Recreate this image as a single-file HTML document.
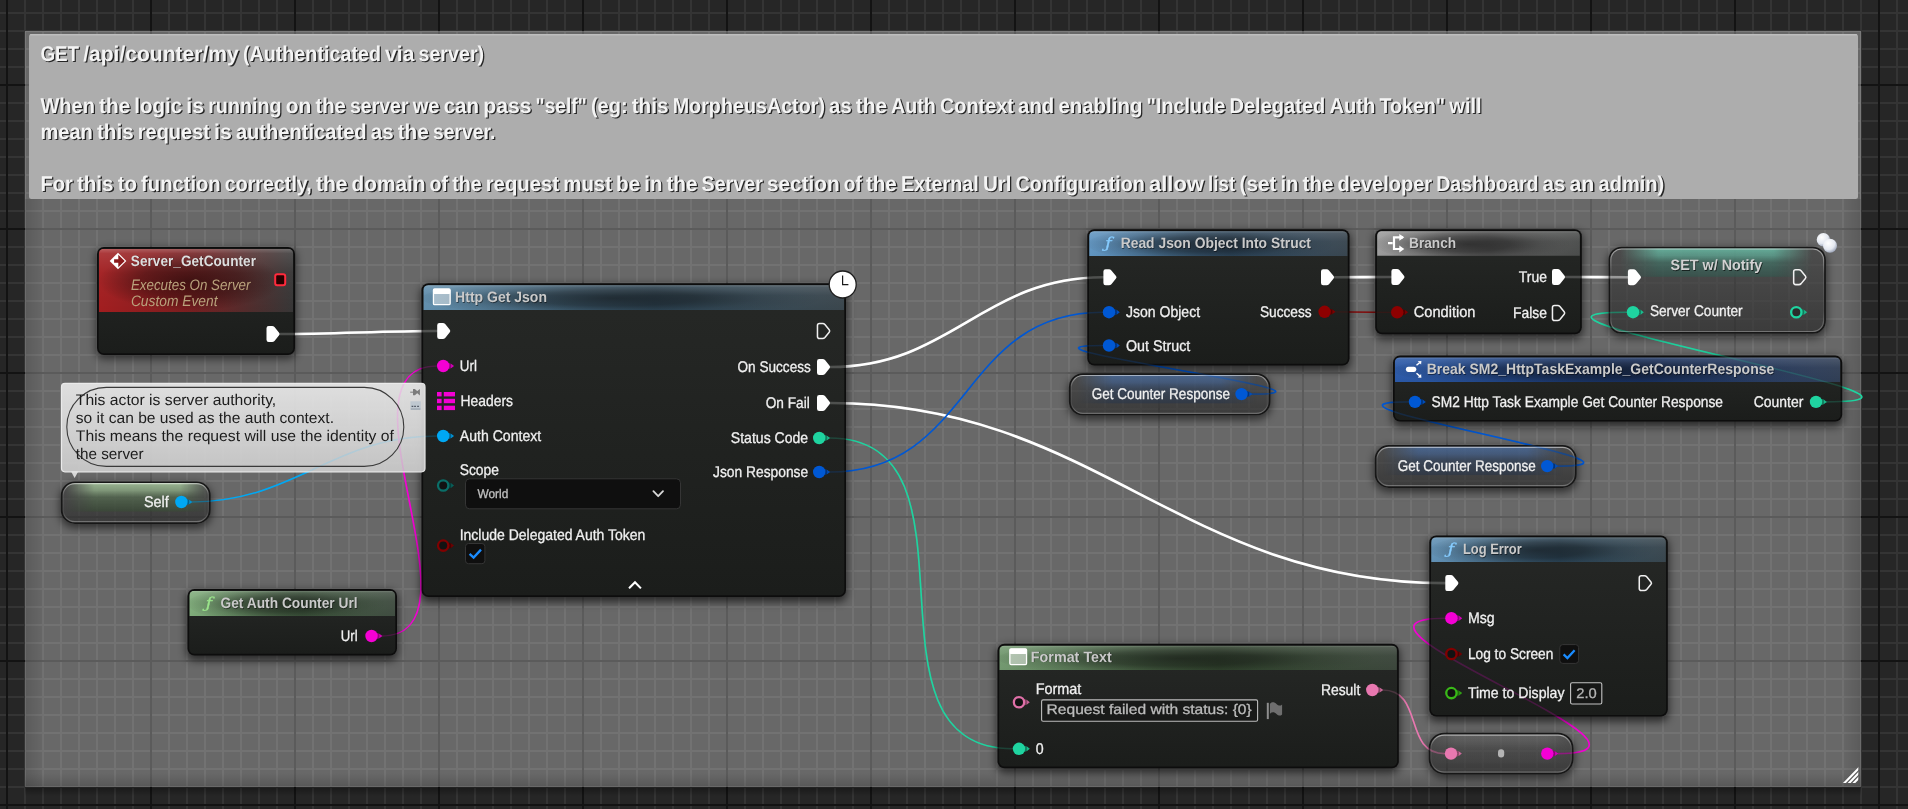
<!DOCTYPE html>
<html lang="en"><head><meta charset="utf-8"><title>Blueprint - GET /api/counter/my</title>
<style>html,body{margin:0;padding:0;background:#262626;overflow:hidden}svg{display:block;will-change:transform}text{white-space:pre}</style></head>
<body><svg width="1908" height="809" viewBox="0 0 1908 809" text-rendering="geometricPrecision"><defs>
<linearGradient id="cmtB" x1="0" y1="0" x2="0" y2="1"><stop offset="0" stop-color="#000" stop-opacity="0"/><stop offset="1" stop-color="#000" stop-opacity="0.16"/></linearGradient>
<linearGradient id="cmtR" x1="0" y1="0" x2="1" y2="0"><stop offset="0" stop-color="#000" stop-opacity="0"/><stop offset="1" stop-color="#000" stop-opacity="0.13"/></linearGradient>
<linearGradient id="cmtL" x1="0" y1="0" x2="1" y2="0"><stop offset="0" stop-color="#000" stop-opacity="0.13"/><stop offset="1" stop-color="#000" stop-opacity="0"/></linearGradient>
<linearGradient id="cmtS" x1="0" y1="0" x2="0" y2="1"><stop offset="0" stop-color="#000" stop-opacity="0.35"/><stop offset="1" stop-color="#000" stop-opacity="0"/></linearGradient>
<clipPath id="grip"><rect x="1840" y="765" width="18.3" height="18"/></clipPath>
<filter id="sh" x="-20%" y="-20%" width="140%" height="150%"><feGaussianBlur stdDeviation="4"/></filter>
<linearGradient id="gloss" x1="0" y1="0" x2="0" y2="1"><stop offset="0" stop-color="#fff" stop-opacity="0.30"/><stop offset="0.06" stop-color="#fff" stop-opacity="0.14"/><stop offset="0.3" stop-color="#fff" stop-opacity="0.05"/><stop offset="1" stop-color="#fff" stop-opacity="0"/></linearGradient>
<radialGradient id="hdark" cx="0.45" cy="0.5" r="0.5"><stop offset="0" stop-color="#000" stop-opacity="0.6"/><stop offset="0.4" stop-color="#000" stop-opacity="0.44"/><stop offset="0.7" stop-color="#000" stop-opacity="0.14"/><stop offset="0.88" stop-color="#000" stop-opacity="0.04"/><stop offset="1" stop-color="#000" stop-opacity="0"/></radialGradient>
<linearGradient id="bodyg" x1="0" y1="0" x2="0" y2="1"><stop offset="0" stop-color="#262826"/><stop offset="1" stop-color="#1b1d1b"/></linearGradient>

<linearGradient id="evg" x1="0" y1="0" x2="1" y2="0"><stop offset="0" stop-color="#a11a1c"/><stop offset="0.45" stop-color="#7a1a1c"/><stop offset="0.8" stop-color="#4a2a2a"/><stop offset="1" stop-color="#333"/></linearGradient>
<radialGradient id="evd" cx="0.5" cy="0.5" r="0.5"><stop offset="0" stop-color="#200" stop-opacity="0.75"/><stop offset="0.55" stop-color="#200" stop-opacity="0.45"/><stop offset="1" stop-color="#200" stop-opacity="0"/></radialGradient>
<clipPath id="evc"><rect x="99" y="249" width="194" height="63"/></clipPath>
<linearGradient id="hg1" x1="0" y1="0" x2="1" y2="0"><stop offset="0" stop-color="#5e8cab"/><stop offset="0.55" stop-color="#2f4a5c"/><stop offset="1" stop-color="#364249"/></linearGradient><clipPath id="hg1c"><rect x="423.5" y="285.3" width="420.5" height="24.69999999999999"/></clipPath><linearGradient id="hg2" x1="0" y1="0" x2="1" y2="0"><stop offset="0" stop-color="#7dab78"/><stop offset="0.55" stop-color="#3f5a3e"/><stop offset="1" stop-color="#3c493d"/></linearGradient><clipPath id="hg2c"><rect x="189.5" y="591" width="205.5" height="25"/></clipPath><linearGradient id="hg3" x1="0" y1="0" x2="1" y2="0"><stop offset="0" stop-color="#5d93c0"/><stop offset="0.55" stop-color="#2d4a63"/><stop offset="1" stop-color="#35424c"/></linearGradient><clipPath id="hg3c"><rect x="1089.3" y="231.3" width="258.2" height="24.69999999999999"/></clipPath><linearGradient id="hg4" x1="0" y1="0" x2="1" y2="0"><stop offset="0" stop-color="#9a9a9a"/><stop offset="0.55" stop-color="#5a5a5a"/><stop offset="1" stop-color="#474948"/></linearGradient><clipPath id="hg4c"><rect x="1377.2" y="231.2" width="202.6" height="24.600000000000023"/></clipPath><linearGradient id="hg5" x1="0" y1="0" x2="1" y2="0"><stop offset="0" stop-color="#2655a5"/><stop offset="0.55" stop-color="#173570"/><stop offset="1" stop-color="#2c3a51"/></linearGradient><clipPath id="hg5c"><rect x="1395" y="357.6" width="445.2" height="24.399999999999977"/></clipPath><linearGradient id="hg6" x1="0" y1="0" x2="1" y2="0"><stop offset="0" stop-color="#5e8fb4"/><stop offset="0.55" stop-color="#2c4a5f"/><stop offset="1" stop-color="#34424a"/></linearGradient><clipPath id="hg6c"><rect x="1431.3" y="537.4" width="234.5" height="24.600000000000023"/></clipPath><linearGradient id="hg7" x1="0" y1="0" x2="1" y2="0"><stop offset="0" stop-color="#6f966c"/><stop offset="0.55" stop-color="#33492f"/><stop offset="1" stop-color="#374237"/></linearGradient><clipPath id="hg7c"><rect x="999.5" y="645.8" width="397.3" height="24.200000000000045"/></clipPath><linearGradient id="rim" x1="0" y1="0" x2="0" y2="1"><stop offset="0" stop-color="#fff" stop-opacity="0.5"/><stop offset="0.3" stop-color="#fff" stop-opacity="0.10"/><stop offset="0.75" stop-color="#fff" stop-opacity="0.06"/><stop offset="1" stop-color="#fff" stop-opacity="0.28"/></linearGradient><linearGradient id="vbody" x1="0" y1="0" x2="0" y2="1"><stop offset="0" stop-color="#3c3c3c" stop-opacity="0.62"/><stop offset="1" stop-color="#202020" stop-opacity="0.62"/></linearGradient><linearGradient id="hfade" x1="0" y1="0" x2="1" y2="0"><stop offset="0" stop-color="#fff" stop-opacity="0"/><stop offset="0.2" stop-color="#fff" stop-opacity="1"/><stop offset="0.8" stop-color="#fff" stop-opacity="1"/><stop offset="1" stop-color="#fff" stop-opacity="0"/></linearGradient><linearGradient id="vn8" x1="0" y1="0" x2="0" y2="1"><stop offset="0" stop-color="#a8c89e" stop-opacity="0.85"/><stop offset="0.26" stop-color="#8fad87" stop-opacity="0.78"/><stop offset="0.5" stop-color="#576f52" stop-opacity="0.68"/><stop offset="1" stop-color="#384c34" stop-opacity="0.59"/></linearGradient><mask id="vn8m" maskUnits="userSpaceOnUse" x="60.9" y="481.5" width="149.7" height="42.400000000000006"><rect x="65.5" y="481.5" width="143.5" height="42.400000000000006" fill="url(#hfade)"/></mask><clipPath id="vn8c"><rect x="62.4" y="483.0" width="146.7" height="39.400000000000006" rx="12.5"/></clipPath><clipPath id="vn8o"><path clip-rule="evenodd" d="M30.9 451.5h209.7v112.4h-209.7zM74.9 481.5h121.69999999999999a14 14 0 0 1 14 14v14.400000000000006a14 14 0 0 1 -14 14h-121.69999999999999a14 14 0 0 1 -14 -14v-14.400000000000006a14 14 0 0 1 14 -14z"/></clipPath><linearGradient id="vn9" x1="0" y1="0" x2="0" y2="1"><stop offset="0" stop-color="#4a72ac" stop-opacity="0.68"/><stop offset="0.26" stop-color="#426497" stop-opacity="0.63"/><stop offset="0.5" stop-color="#2f4566" stop-opacity="0.54"/><stop offset="1" stop-color="#24334b" stop-opacity="0.48"/></linearGradient><mask id="vn9m" maskUnits="userSpaceOnUse" x="1069.0" y="373.3" width="201.39999999999998" height="42.2"><rect x="1076.6" y="373.3" width="180.2" height="42.2" fill="url(#hfade)"/></mask><clipPath id="vn9c"><rect x="1070.5" y="374.8" width="198.39999999999998" height="39.2" rx="12.5"/></clipPath><clipPath id="vn9o"><path clip-rule="evenodd" d="M1039.0 343.3h261.4v112.2h-261.4zM1083.0 373.3h173.39999999999998a14 14 0 0 1 14 14v14.200000000000003a14 14 0 0 1 -14 14h-173.39999999999998a14 14 0 0 1 -14 -14v-14.200000000000003a14 14 0 0 1 14 -14z"/></clipPath><linearGradient id="vn10" x1="0" y1="0" x2="0" y2="1"><stop offset="0" stop-color="#4a72ac" stop-opacity="0.68"/><stop offset="0.26" stop-color="#426497" stop-opacity="0.63"/><stop offset="0.5" stop-color="#2f4566" stop-opacity="0.54"/><stop offset="1" stop-color="#24334b" stop-opacity="0.48"/></linearGradient><mask id="vn10m" maskUnits="userSpaceOnUse" x="1374.8000000000002" y="445.1" width="201.79999999999998" height="42.800000000000004"><rect x="1382.4" y="445.1" width="180.6" height="42.800000000000004" fill="url(#hfade)"/></mask><clipPath id="vn10c"><rect x="1376.3000000000002" y="446.6" width="198.79999999999998" height="39.800000000000004" rx="12.5"/></clipPath><clipPath id="vn10o"><path clip-rule="evenodd" d="M1344.8000000000002 415.1h261.79999999999995v112.80000000000001h-261.79999999999995zM1388.8000000000002 445.1h173.79999999999998a14 14 0 0 1 14 14v14.800000000000004a14 14 0 0 1 -14 14h-173.79999999999998a14 14 0 0 1 -14 -14v-14.800000000000004a14 14 0 0 1 14 -14z"/></clipPath><linearGradient id="vn11" x1="0" y1="0" x2="0" y2="1"><stop offset="0" stop-color="#6cc6ae" stop-opacity="0.78"/><stop offset="0.26" stop-color="#5fae99" stop-opacity="0.72"/><stop offset="0.5" stop-color="#40786a" stop-opacity="0.62"/><stop offset="1" stop-color="#2f5a50" stop-opacity="0.55"/></linearGradient><mask id="vn11m" maskUnits="userSpaceOnUse" x="1608.6000000000001" y="246.8" width="217.2" height="86.9"><rect x="1620.2" y="246.8" width="192.0" height="86.9" fill="url(#hfade)"/></mask><clipPath id="vn11c"><rect x="1610.1000000000001" y="248.3" width="214.2" height="83.9" rx="11.5"/></clipPath><clipPath id="vn11o"><path clip-rule="evenodd" d="M1578.6000000000001 216.8h277.2v156.9h-277.2zM1621.6000000000001 246.8h191.2a13 13 0 0 1 13 13v60.900000000000006a13 13 0 0 1 -13 13h-191.2a13 13 0 0 1 -13 -13v-60.900000000000006a13 13 0 0 1 13 -13z"/></clipPath><radialGradient id="sph" cx="0.38" cy="0.32" r="0.75"><stop offset="0" stop-color="#fff"/><stop offset="0.6" stop-color="#e4e8f0"/><stop offset="1" stop-color="#8d97ad"/></radialGradient><linearGradient id="vn12" x1="0" y1="0" x2="0" y2="1"><stop offset="0" stop-color="#8a8a8a" stop-opacity="0.35"/><stop offset="0.26" stop-color="#7c7c7c" stop-opacity="0.32"/><stop offset="0.5" stop-color="#5c5c5c" stop-opacity="0.28"/><stop offset="1" stop-color="#4a4a4a" stop-opacity="0.24"/></linearGradient><mask id="vn12m" maskUnits="userSpaceOnUse" x="1428.7" y="732.9" width="144.79999999999998" height="41.400000000000006"><rect x="1425.3" y="732.9" width="151.6" height="41.400000000000006" fill="url(#hfade)"/></mask><clipPath id="vn12c"><rect x="1430.2" y="734.4" width="141.79999999999998" height="38.400000000000006" rx="14.0"/></clipPath><clipPath id="vn12o"><path clip-rule="evenodd" d="M1398.7 702.9h204.79999999999998v111.4h-204.79999999999998zM1444.2 732.9h113.79999999999998a15.5 15.5 0 0 1 15.5 15.5v10.400000000000006a15.5 15.5 0 0 1 -15.5 15.5h-113.79999999999998a15.5 15.5 0 0 1 -15.5 -15.5v-10.400000000000006a15.5 15.5 0 0 1 15.5 -15.5z"/></clipPath><linearGradient id="bub" x1="0" y1="0" x2="0" y2="1"><stop offset="0" stop-color="#e8e8e8"/><stop offset="1" stop-color="#cbcbcb"/></linearGradient><clipPath id="bubc"><rect x="62" y="384" width="362.5" height="87.5" rx="3"/></clipPath></defs>
<rect width="1908" height="809" fill="#262626"/><path d="M-11 0V809M25 0V809M43 0V809M61 0V809M79 0V809M97 0V809M115 0V809M133 0V809M169 0V809M187 0V809M205 0V809M223 0V809M241 0V809M259 0V809M277 0V809M313 0V809M331 0V809M349 0V809M367 0V809M385 0V809M403 0V809M421 0V809M457 0V809M475 0V809M493 0V809M511 0V809M529 0V809M547 0V809M565 0V809M601 0V809M619 0V809M637 0V809M655 0V809M673 0V809M691 0V809M709 0V809M745 0V809M763 0V809M781 0V809M799 0V809M817 0V809M835 0V809M853 0V809M889 0V809M907 0V809M925 0V809M943 0V809M961 0V809M979 0V809M997 0V809M1033 0V809M1051 0V809M1069 0V809M1087 0V809M1105 0V809M1123 0V809M1141 0V809M1177 0V809M1195 0V809M1213 0V809M1231 0V809M1249 0V809M1267 0V809M1285 0V809M1321 0V809M1339 0V809M1357 0V809M1375 0V809M1393 0V809M1411 0V809M1429 0V809M1465 0V809M1483 0V809M1501 0V809M1519 0V809M1537 0V809M1555 0V809M1573 0V809M1609 0V809M1627 0V809M1645 0V809M1663 0V809M1681 0V809M1699 0V809M1717 0V809M1753 0V809M1771 0V809M1789 0V809M1807 0V809M1825 0V809M1843 0V809M1861 0V809M1897 0V809M1915 0V809M1933 0V809M0 -5H1908M0 13H1908M0 31H1908M0 49H1908M0 67H1908M0 103H1908M0 121H1908M0 139H1908M0 157H1908M0 175H1908M0 193H1908M0 211H1908M0 247H1908M0 265H1908M0 283H1908M0 301H1908M0 319H1908M0 337H1908M0 355H1908M0 391H1908M0 409H1908M0 427H1908M0 445H1908M0 463H1908M0 481H1908M0 499H1908M0 535H1908M0 553H1908M0 571H1908M0 589H1908M0 607H1908M0 625H1908M0 643H1908M0 679H1908M0 697H1908M0 715H1908M0 733H1908M0 751H1908M0 769H1908M0 787H1908M0 823H1908" stroke="#343434" stroke-width="2" fill="none"/><path d="M7 0V809M151 0V809M295 0V809M439 0V809M583 0V809M727 0V809M871 0V809M1015 0V809M1159 0V809M1303 0V809M1447 0V809M1591 0V809M1735 0V809M1879 0V809M0 85H1908M0 229H1908M0 373H1908M0 517H1908M0 661H1908M0 805H1908" stroke="#131313" stroke-width="2" fill="none"/><rect x="25" y="787" width="1836" height="9" fill="url(#cmtS)"/><rect x="25" y="31" width="1836" height="756" fill="#fff" fill-opacity="0.305"/><rect x="25" y="773" width="1836" height="14" fill="url(#cmtB)"/><rect x="1841" y="199" width="20" height="588" fill="url(#cmtR)"/><rect x="25" y="199" width="20" height="588" fill="url(#cmtL)"/><rect x="25.5" y="31.5" width="1835" height="755" fill="none" stroke="#fff" stroke-opacity="0.05"/><rect x="29" y="34" width="1829" height="165" rx="2.5" fill="#adadad"/><rect x="30" y="34" width="1827" height="1.5" fill="#c4c4c4" opacity="0.7"/><path clip-path="url(#grip)" d="M1842.5 785L1860 767M1847.2 785L1860 771.8M1851.9 785L1860 776.6" stroke="#fff" stroke-width="2.1" fill="none"/><g font-family='"Liberation Sans", Arial, sans-serif'><text y="60.5" font-size="21.3" font-weight="bold" fill="#f4f4f4" style="text-shadow:1.4px 1.6px 0 #262626"><tspan x="40.4" textLength="38.7" lengthAdjust="spacingAndGlyphs">GET</tspan> <tspan x="83.2" textLength="155.6" lengthAdjust="spacingAndGlyphs">/api/counter/my</tspan> <tspan x="242.9" textLength="138.1" lengthAdjust="spacingAndGlyphs">(Authenticated</tspan> <tspan x="385.1" textLength="29.3" lengthAdjust="spacingAndGlyphs">via</tspan> <tspan x="418.5" textLength="65.6" lengthAdjust="spacingAndGlyphs">server)</tspan></text><text y="112.5" font-size="21.3" font-weight="bold" fill="#f4f4f4" style="text-shadow:1.4px 1.6px 0 #262626"><tspan x="40.4" textLength="54.5" lengthAdjust="spacingAndGlyphs">When</tspan> <tspan x="99.0" textLength="31.2" lengthAdjust="spacingAndGlyphs">the</tspan> <tspan x="134.3" textLength="47.9" lengthAdjust="spacingAndGlyphs">logic</tspan> <tspan x="186.3" textLength="17.8" lengthAdjust="spacingAndGlyphs">is</tspan> <tspan x="208.2" textLength="73.4" lengthAdjust="spacingAndGlyphs">running</tspan> <tspan x="285.7" textLength="25.6" lengthAdjust="spacingAndGlyphs">on</tspan> <tspan x="315.4" textLength="30.4" lengthAdjust="spacingAndGlyphs">the</tspan> <tspan x="349.9" textLength="58.7" lengthAdjust="spacingAndGlyphs">server</tspan> <tspan x="412.7" textLength="26.9" lengthAdjust="spacingAndGlyphs">we</tspan> <tspan x="443.7" textLength="35.4" lengthAdjust="spacingAndGlyphs">can</tspan> <tspan x="483.2" textLength="48.3" lengthAdjust="spacingAndGlyphs">pass</tspan> <tspan x="535.6" textLength="51.2" lengthAdjust="spacingAndGlyphs">"self"</tspan> <tspan x="590.9" textLength="36.7" lengthAdjust="spacingAndGlyphs">(eg:</tspan> <tspan x="631.7" textLength="36.9" lengthAdjust="spacingAndGlyphs">this</tspan> <tspan x="672.7" textLength="152.3" lengthAdjust="spacingAndGlyphs">MorpheusActor)</tspan> <tspan x="829.1" textLength="22.6" lengthAdjust="spacingAndGlyphs">as</tspan> <tspan x="855.8" textLength="31.2" lengthAdjust="spacingAndGlyphs">the</tspan> <tspan x="891.1" textLength="44.7" lengthAdjust="spacingAndGlyphs">Auth</tspan> <tspan x="939.9" textLength="74.1" lengthAdjust="spacingAndGlyphs">Context</tspan> <tspan x="1018.1" textLength="36.2" lengthAdjust="spacingAndGlyphs">and</tspan> <tspan x="1058.4" textLength="84.0" lengthAdjust="spacingAndGlyphs">enabling</tspan> <tspan x="1146.5" textLength="78.9" lengthAdjust="spacingAndGlyphs">"Include</tspan> <tspan x="1229.5" textLength="95.8" lengthAdjust="spacingAndGlyphs">Delegated</tspan> <tspan x="1329.4" textLength="45.9" lengthAdjust="spacingAndGlyphs">Auth</tspan> <tspan x="1379.4" textLength="65.8" lengthAdjust="spacingAndGlyphs">Token"</tspan> <tspan x="1449.3" textLength="32.3" lengthAdjust="spacingAndGlyphs">will</tspan></text><text y="138.5" font-size="21.3" font-weight="bold" fill="#f4f4f4" style="text-shadow:1.4px 1.6px 0 #262626"><tspan x="40.4" textLength="52.5" lengthAdjust="spacingAndGlyphs">mean</tspan> <tspan x="97.0" textLength="36.7" lengthAdjust="spacingAndGlyphs">this</tspan> <tspan x="137.8" textLength="72.1" lengthAdjust="spacingAndGlyphs">request</tspan> <tspan x="214.0" textLength="17.8" lengthAdjust="spacingAndGlyphs">is</tspan> <tspan x="235.9" textLength="130.7" lengthAdjust="spacingAndGlyphs">authenticated</tspan> <tspan x="370.7" textLength="22.9" lengthAdjust="spacingAndGlyphs">as</tspan> <tspan x="397.7" textLength="31.1" lengthAdjust="spacingAndGlyphs">the</tspan> <tspan x="432.9" textLength="62.6" lengthAdjust="spacingAndGlyphs">server.</tspan></text><text y="190.5" font-size="21.3" font-weight="bold" fill="#f4f4f4" style="text-shadow:1.4px 1.6px 0 #262626"><tspan x="40.4" textLength="32.4" lengthAdjust="spacingAndGlyphs">For</tspan> <tspan x="76.9" textLength="36.7" lengthAdjust="spacingAndGlyphs">this</tspan> <tspan x="117.7" textLength="19.3" lengthAdjust="spacingAndGlyphs">to</tspan> <tspan x="141.1" textLength="79.6" lengthAdjust="spacingAndGlyphs">function</tspan> <tspan x="224.8" textLength="87.0" lengthAdjust="spacingAndGlyphs">correctly,</tspan> <tspan x="315.9" textLength="31.6" lengthAdjust="spacingAndGlyphs">the</tspan> <tspan x="351.6" textLength="73.9" lengthAdjust="spacingAndGlyphs">domain</tspan> <tspan x="429.6" textLength="18.5" lengthAdjust="spacingAndGlyphs">of</tspan> <tspan x="452.2" textLength="29.4" lengthAdjust="spacingAndGlyphs">the</tspan> <tspan x="485.7" textLength="73.5" lengthAdjust="spacingAndGlyphs">request</tspan> <tspan x="563.3" textLength="48.7" lengthAdjust="spacingAndGlyphs">must</tspan> <tspan x="616.1" textLength="24.1" lengthAdjust="spacingAndGlyphs">be</tspan> <tspan x="644.3" textLength="18.0" lengthAdjust="spacingAndGlyphs">in</tspan> <tspan x="666.4" textLength="31.1" lengthAdjust="spacingAndGlyphs">the</tspan> <tspan x="701.6" textLength="61.3" lengthAdjust="spacingAndGlyphs">Server</tspan> <tspan x="767.0" textLength="72.7" lengthAdjust="spacingAndGlyphs">section</tspan> <tspan x="843.8" textLength="18.0" lengthAdjust="spacingAndGlyphs">of</tspan> <tspan x="865.9" textLength="30.9" lengthAdjust="spacingAndGlyphs">the</tspan> <tspan x="900.9" textLength="77.9" lengthAdjust="spacingAndGlyphs">External</tspan> <tspan x="982.9" textLength="28.6" lengthAdjust="spacingAndGlyphs">Url</tspan> <tspan x="1015.6" textLength="129.3" lengthAdjust="spacingAndGlyphs">Configuration</tspan> <tspan x="1149.0" textLength="55.0" lengthAdjust="spacingAndGlyphs">allow</tspan> <tspan x="1208.1" textLength="27.3" lengthAdjust="spacingAndGlyphs">list</tspan> <tspan x="1239.5" textLength="36.9" lengthAdjust="spacingAndGlyphs">(set</tspan> <tspan x="1280.5" textLength="18.0" lengthAdjust="spacingAndGlyphs">in</tspan> <tspan x="1302.6" textLength="30.9" lengthAdjust="spacingAndGlyphs">the</tspan> <tspan x="1337.6" textLength="94.5" lengthAdjust="spacingAndGlyphs">developer</tspan> <tspan x="1436.2" textLength="102.3" lengthAdjust="spacingAndGlyphs">Dashboard</tspan> <tspan x="1542.6" textLength="22.8" lengthAdjust="spacingAndGlyphs">as</tspan> <tspan x="1569.5" textLength="24.9" lengthAdjust="spacingAndGlyphs">an</tspan> <tspan x="1598.5" textLength="65.8" lengthAdjust="spacingAndGlyphs">admin)</tspan></text></g><g fill="none" stroke-linecap="round" opacity="1.0"><path d="M280.5 334.0C333.7 334.0 383.8 331.0 437.0 331.0" stroke="#ffffff" stroke-width="2.6"/><path d="M830.5 367.0C951.3 367.0 982.5 277.3 1103.3 277.3" stroke="#ffffff" stroke-width="2.6"/><path d="M830.5 403.0C1095.4 403.0 1180.3 583.1 1445.2 583.1" stroke="#ffffff" stroke-width="2.6"/><path d="M1335.1 277.3C1353.9 277.3 1372.5 277.0 1391.3 277.0" stroke="#ffffff" stroke-width="2.6"/><path d="M1566.0 277.0C1586.7 277.0 1607.2 277.2 1627.9 277.2" stroke="#ffffff" stroke-width="2.6"/><path d="M1334.6 311.8C1353.6 311.8 1372.0 312.3 1391.0 312.3" stroke="#840000" stroke-width="1.3"/><path d="M191.0 502.0C295.0 502.0 333.0 436.0 437.0 436.0" stroke="#00a8f4" stroke-width="1.6"/><path d="M381.5 636.0C490.0 636.0 328.5 366.0 437.0 366.0" stroke="#f400d4" stroke-width="1.6"/><path d="M829.4 438.0C994.1 438.0 848.1 748.8 1012.8 748.8" stroke="#1fd4a0" stroke-width="1.6"/><path d="M829.4 472.0C973.8 472.0 958.4 312.3 1102.8 312.3" stroke="#0058d4" stroke-width="1.6"/><path d="M1251.5 394.1C1374.9 394.1 979.4 345.5 1102.8 345.5" stroke="#0058d4" stroke-width="1.6"/><path d="M1557.4 466.1C1688.6 466.1 1277.5 401.9 1408.7 401.9" stroke="#0058d4" stroke-width="1.6"/><path d="M1826.2 401.9C2003.9 401.9 1449.2 312.2 1626.9 312.2" stroke="#1fd4a0" stroke-width="1.6"/><path d="M1382.5 690.0C1424.5 690.0 1402.8 753.6 1444.8 753.6" stroke="#e878b0" stroke-width="1.6"/><path d="M1557.9 753.6C1700.7 753.6 1302.4 618.2 1445.2 618.2" stroke="#f400d4" stroke-width="1.6"/></g><g><rect x="96" y="249" width="200" height="110" rx="8" fill="#000" opacity="0.55" filter="url(#sh)"/><rect x="97" y="247" width="198" height="108" rx="7" fill="#0d0d0d"/><rect x="98.7" y="248.7" width="194.6" height="104.6" rx="5.3" fill="url(#bodyg)"/><g clip-path="url(#evc)"><rect x="98.7" y="248.7" width="194.6" height="80" rx="5.3" fill="url(#evg)"/><ellipse cx="190" cy="281" rx="92" ry="30" fill="url(#evd)"/><rect x="98.7" y="248.7" width="194.6" height="80" rx="5.3" fill="url(#gloss)"/></g><rect x="420.5" y="285.3" width="426.5" height="316.7" rx="8" fill="#000" opacity="0.6" filter="url(#sh)"/><rect x="421.5" y="283.3" width="424.5" height="313.7" rx="7" fill="#0d0d0d"/><rect x="423.2" y="285.0" width="421.1" height="310.3" rx="5.3" fill="url(#bodyg)"/><g clip-path="url(#hg1c)"><rect x="423.2" y="285.0" width="421.1" height="34.69999999999999" rx="5.3" fill="url(#hg1)"/><ellipse cx="633.75" cy="298.15" rx="212.25" ry="19.22399999999999" fill="url(#hdark)"/><rect x="423.2" y="285.0" width="421.1" height="34.69999999999999" rx="5.3" fill="url(#gloss)"/></g><rect x="186.5" y="591" width="211.5" height="69.5" rx="8" fill="#000" opacity="0.6" filter="url(#sh)"/><rect x="187.5" y="589" width="209.5" height="66.5" rx="7" fill="#0d0d0d"/><rect x="189.2" y="590.7" width="206.1" height="63.1" rx="5.3" fill="url(#bodyg)"/><g clip-path="url(#hg2c)"><rect x="189.2" y="590.7" width="206.1" height="35" rx="5.3" fill="url(#hg2)"/><ellipse cx="292.25" cy="604.0" rx="104.75" ry="19.439999999999998" fill="url(#hdark)"/><rect x="189.2" y="590.7" width="206.1" height="35" rx="5.3" fill="url(#gloss)"/></g><rect x="1086.3" y="231.3" width="264.2" height="139.2" rx="8" fill="#000" opacity="0.6" filter="url(#sh)"/><rect x="1087.3" y="229.3" width="262.2" height="136.2" rx="7" fill="#0d0d0d"/><rect x="1089.0" y="231.0" width="258.8" height="132.79999999999998" rx="5.3" fill="url(#bodyg)"/><g clip-path="url(#hg3c)"><rect x="1089.0" y="231.0" width="258.8" height="34.69999999999999" rx="5.3" fill="url(#hg3)"/><ellipse cx="1218.3999999999999" cy="244.15" rx="131.1" ry="19.22399999999999" fill="url(#hdark)"/><rect x="1089.0" y="231.0" width="258.8" height="34.69999999999999" rx="5.3" fill="url(#gloss)"/></g><rect x="1374.2" y="231.2" width="208.6" height="108" rx="8" fill="#000" opacity="0.6" filter="url(#sh)"/><rect x="1375.2" y="229.2" width="206.6" height="105" rx="7" fill="#0d0d0d"/><rect x="1376.9" y="230.89999999999998" width="203.2" height="101.6" rx="5.3" fill="url(#bodyg)"/><g clip-path="url(#hg4c)"><rect x="1376.9" y="230.89999999999998" width="203.2" height="34.60000000000002" rx="5.3" fill="url(#hg4)"/><ellipse cx="1478.5" cy="244.0" rx="103.3" ry="19.152000000000015" fill="url(#hdark)"/><rect x="1376.9" y="230.89999999999998" width="203.2" height="34.60000000000002" rx="5.3" fill="url(#gloss)"/></g><rect x="1392" y="357.6" width="451.2" height="69" rx="8" fill="#000" opacity="0.6" filter="url(#sh)"/><rect x="1393" y="355.6" width="449.2" height="66" rx="7" fill="#0d0d0d"/><rect x="1394.7" y="357.3" width="445.8" height="62.6" rx="5.3" fill="url(#bodyg)"/><g clip-path="url(#hg5c)"><rect x="1394.7" y="357.3" width="445.8" height="34.39999999999998" rx="5.3" fill="url(#hg5)"/><ellipse cx="1617.6" cy="370.3" rx="224.6" ry="19.00799999999998" fill="url(#hdark)"/><rect x="1394.7" y="357.3" width="445.8" height="34.39999999999998" rx="5.3" fill="url(#gloss)"/></g><rect x="1428.3" y="537.4" width="240.5" height="184.2" rx="8" fill="#000" opacity="0.6" filter="url(#sh)"/><rect x="1429.3" y="535.4" width="238.5" height="181.2" rx="7" fill="#0d0d0d"/><rect x="1431.0" y="537.1" width="235.1" height="177.79999999999998" rx="5.3" fill="url(#bodyg)"/><g clip-path="url(#hg6c)"><rect x="1431.0" y="537.1" width="235.1" height="34.60000000000002" rx="5.3" fill="url(#hg6)"/><ellipse cx="1548.55" cy="550.2" rx="119.25" ry="19.152000000000015" fill="url(#hdark)"/><rect x="1431.0" y="537.1" width="235.1" height="34.60000000000002" rx="5.3" fill="url(#gloss)"/></g><rect x="996.5" y="645.8" width="403.3" height="127.4" rx="8" fill="#000" opacity="0.6" filter="url(#sh)"/><rect x="997.5" y="643.8" width="401.3" height="124.4" rx="7" fill="#0d0d0d"/><rect x="999.2" y="645.5" width="397.90000000000003" height="121.0" rx="5.3" fill="url(#bodyg)"/><g clip-path="url(#hg7c)"><rect x="999.2" y="645.5" width="397.90000000000003" height="34.200000000000045" rx="5.3" fill="url(#hg7)"/><ellipse cx="1198.15" cy="658.4" rx="200.65" ry="18.864000000000033" fill="url(#hdark)"/><rect x="999.2" y="645.5" width="397.90000000000003" height="34.200000000000045" rx="5.3" fill="url(#gloss)"/></g><g clip-path="url(#vn8o)"><rect x="59.9" y="483.5" width="151.7" height="44.400000000000006" rx="15" fill="#000" opacity="0.55" filter="url(#sh)"/></g><rect x="61.699999999999996" y="482.3" width="148.1" height="40.800000000000004" rx="13.2" fill="url(#vbody)" stroke="#171717" stroke-width="1.8"/><g clip-path="url(#vn8c)"><rect x="65.5" y="483.0" width="143.5" height="28.5" fill="url(#vn8)" mask="url(#vn8m)"/></g><rect x="63.1" y="483.7" width="145.29999999999998" height="38.00000000000001" rx="11.8" fill="none" stroke="url(#rim)" stroke-width="1.2"/><g clip-path="url(#vn9o)"><rect x="1068.0" y="375.3" width="203.39999999999998" height="44.2" rx="15" fill="#000" opacity="0.55" filter="url(#sh)"/></g><rect x="1069.8" y="374.1" width="199.79999999999998" height="40.6" rx="13.2" fill="url(#vbody)" stroke="#171717" stroke-width="1.8"/><g clip-path="url(#vn9c)"><rect x="1076.6" y="374.8" width="180.2" height="28.5" fill="url(#vn9)" mask="url(#vn9m)"/></g><rect x="1071.2" y="375.5" width="196.99999999999997" height="37.800000000000004" rx="11.8" fill="none" stroke="url(#rim)" stroke-width="1.2"/><g clip-path="url(#vn10o)"><rect x="1373.8000000000002" y="447.1" width="203.79999999999998" height="44.800000000000004" rx="15" fill="#000" opacity="0.55" filter="url(#sh)"/></g><rect x="1375.6000000000001" y="445.90000000000003" width="200.2" height="41.2" rx="13.2" fill="url(#vbody)" stroke="#171717" stroke-width="1.8"/><g clip-path="url(#vn10c)"><rect x="1382.4" y="446.6" width="180.6" height="28.5" fill="url(#vn10)" mask="url(#vn10m)"/></g><rect x="1377.0000000000002" y="447.3" width="197.39999999999998" height="38.400000000000006" rx="11.8" fill="none" stroke="url(#rim)" stroke-width="1.2"/><g clip-path="url(#vn11o)"><rect x="1607.6000000000001" y="248.8" width="219.2" height="88.9" rx="14" fill="#000" opacity="0.55" filter="url(#sh)"/></g><rect x="1609.4" y="247.60000000000002" width="215.6" height="85.30000000000001" rx="12.2" fill="url(#vbody)" stroke="#171717" stroke-width="1.8"/><g clip-path="url(#vn11c)"><rect x="1620.2" y="248.3" width="192.0" height="28.5" fill="url(#vn11)" mask="url(#vn11m)"/></g><rect x="1610.8000000000002" y="249.0" width="212.79999999999998" height="82.5" rx="10.8" fill="none" stroke="url(#rim)" stroke-width="1.2"/><g clip-path="url(#vn12o)"><rect x="1427.7" y="734.9" width="146.79999999999998" height="43.400000000000006" rx="16.5" fill="#000" opacity="0.55" filter="url(#sh)"/></g><rect x="1429.5" y="733.6999999999999" width="143.2" height="39.800000000000004" rx="14.7" fill="url(#vbody)" stroke="#171717" stroke-width="1.8"/><g clip-path="url(#vn12c)"><rect x="1425.3" y="734.4" width="151.6" height="29.0" fill="url(#vn12)" mask="url(#vn12m)"/></g><rect x="1430.9" y="735.1" width="140.39999999999998" height="37.00000000000001" rx="13.3" fill="none" stroke="url(#rim)" stroke-width="1.2"/></g><g fill="none" stroke-linecap="round" opacity="0.2"><path d="M280.5 334.0C333.7 334.0 383.8 331.0 437.0 331.0" stroke="#ffffff" stroke-width="2.6"/><path d="M830.5 367.0C951.3 367.0 982.5 277.3 1103.3 277.3" stroke="#ffffff" stroke-width="2.6"/><path d="M830.5 403.0C1095.4 403.0 1180.3 583.1 1445.2 583.1" stroke="#ffffff" stroke-width="2.6"/><path d="M1335.1 277.3C1353.9 277.3 1372.5 277.0 1391.3 277.0" stroke="#ffffff" stroke-width="2.6"/><path d="M1566.0 277.0C1586.7 277.0 1607.2 277.2 1627.9 277.2" stroke="#ffffff" stroke-width="2.6"/><path d="M1334.6 311.8C1353.6 311.8 1372.0 312.3 1391.0 312.3" stroke="#840000" stroke-width="1.3"/><path d="M191.0 502.0C295.0 502.0 333.0 436.0 437.0 436.0" stroke="#00a8f4" stroke-width="1.6"/><path d="M381.5 636.0C490.0 636.0 328.5 366.0 437.0 366.0" stroke="#f400d4" stroke-width="1.6"/><path d="M829.4 438.0C994.1 438.0 848.1 748.8 1012.8 748.8" stroke="#1fd4a0" stroke-width="1.6"/><path d="M829.4 472.0C973.8 472.0 958.4 312.3 1102.8 312.3" stroke="#0058d4" stroke-width="1.6"/><path d="M1251.5 394.1C1374.9 394.1 979.4 345.5 1102.8 345.5" stroke="#0058d4" stroke-width="1.6"/><path d="M1557.4 466.1C1688.6 466.1 1277.5 401.9 1408.7 401.9" stroke="#0058d4" stroke-width="1.6"/><path d="M1826.2 401.9C2003.9 401.9 1449.2 312.2 1626.9 312.2" stroke="#1fd4a0" stroke-width="1.6"/><path d="M1382.5 690.0C1424.5 690.0 1402.8 753.6 1444.8 753.6" stroke="#e878b0" stroke-width="1.6"/><path d="M1557.9 753.6C1700.7 753.6 1302.4 618.2 1445.2 618.2" stroke="#f400d4" stroke-width="1.6"/></g><g font-family='"Liberation Sans", Arial, sans-serif'><path d="M118 252.7L126.3 261L118 269.3L109.7 261Z" fill="#fff"/><path d="M114.1 259.3H118.3V254.8L124.7 261L118.3 267.2V262.8H114.1Z" fill="#8a1a1c"/><text x="130.8" y="265.5" fill="#dedede" font-size="15" font-weight="bold" textLength="125.2" lengthAdjust="spacingAndGlyphs" style="text-shadow:0.7px 0.9px 0 rgba(0,0,0,0.45)">Server_GetCounter</text><text x="130.9" y="289.6" fill="#b9a27c" font-size="15.2" font-style="italic" textLength="119.6" lengthAdjust="spacingAndGlyphs">Executes On Server</text><text x="130.9" y="305.7" fill="#b9a27c" font-size="15.2" font-style="italic" textLength="86.6" lengthAdjust="spacingAndGlyphs">Custom Event</text><rect x="275.2" y="274.2" width="10" height="11" rx="2" fill="#2a0000" stroke="#ff2a3c" stroke-width="2"/><path d="M268.7 326.0H272.1Q273.5 326.0 274.5 327.1L279.1 332.7Q280.2 334.0 279.1 335.3L274.5 340.9Q273.5 342.0 272.1 342.0H268.7Q266.5 342.0 266.5 339.8V328.2Q266.5 326.0 268.7 326.0Z" fill="#fff"/><rect x="433.45" y="288.95" width="16.7" height="15.7" rx="1.2" fill="#fff" fill-opacity="0.47" stroke="#fff" stroke-width="1.3"/><rect x="433.40000000000003" y="288.90000000000003" width="16.8" height="5.2" rx="1" fill="#fff"/><text x="455.1" y="302.0" fill="#cacaca" font-size="15" font-weight="bold" textLength="91.9" lengthAdjust="spacingAndGlyphs" style="text-shadow:0.7px 0.9px 0 rgba(0,0,0,0.45)">Http Get Json</text><path d="M439.4 323.0H442.8Q444.2 323.0 445.2 324.1L449.8 329.7Q450.9 331.0 449.8 332.3L445.2 337.9Q444.2 339.0 442.8 339.0H439.4Q437.2 339.0 437.2 336.8V325.2Q437.2 323.0 439.4 323.0Z" fill="#fff"/><path d="M448.2 363.0L451.3 363.9V368.1L448.2 369.0Z" fill="#f400d4"/><path d="M448.2 363.0L451.3 363.9V368.1L448.2 369.0Z" fill="#000" opacity="0.42"/><path d="M451.1 363.8L454.0 366.0L451.1 368.2Z" fill="#f400d4"/><path d="M451.1 363.8L454.0 366.0L451.1 368.2Z" fill="#000" opacity="0.12"/><circle cx="443.2" cy="366.0" r="6.2" fill="#f400d4"/><text x="459.8" y="370.8" fill="#f0f0f0" font-size="15.4" textLength="17.1" lengthAdjust="spacingAndGlyphs" stroke="#f0f0f0" stroke-width="0.3">Url</text><rect x="437" y="392" width="4.6" height="4.4" fill="#f400d4"/><rect x="443.8" y="392" width="11.2" height="4.4" fill="#f400d4"/><rect x="437" y="398.8" width="4.6" height="4.4" fill="#f400d4"/><rect x="443.8" y="398.8" width="11.2" height="4.4" fill="#f400d4"/><rect x="437" y="405.7" width="4.6" height="4.4" fill="#f400d4"/><rect x="443.8" y="405.7" width="11.2" height="4.4" fill="#f400d4"/><text x="460.5" y="405.6" fill="#f0f0f0" font-size="15.4" textLength="52.5" lengthAdjust="spacingAndGlyphs" stroke="#f0f0f0" stroke-width="0.3">Headers</text><path d="M448.2 433.0L451.3 433.9V438.1L448.2 439.0Z" fill="#00a8f4"/><path d="M448.2 433.0L451.3 433.9V438.1L448.2 439.0Z" fill="#000" opacity="0.42"/><path d="M451.1 433.8L454.0 436.0L451.1 438.2Z" fill="#00a8f4"/><path d="M451.1 433.8L454.0 436.0L451.1 438.2Z" fill="#000" opacity="0.12"/><circle cx="443.2" cy="436.0" r="6.2" fill="#00a8f4"/><text x="459.8" y="440.9" fill="#f0f0f0" font-size="15.4" textLength="81.4" lengthAdjust="spacingAndGlyphs" stroke="#f0f0f0" stroke-width="0.3">Auth Context</text><text x="459.7" y="474.7" fill="#f0f0f0" font-size="15.4" textLength="39.3" lengthAdjust="spacingAndGlyphs" stroke="#f0f0f0" stroke-width="0.3">Scope</text><path d="M448.2 482.5L451.3 483.4V487.6L448.2 488.5Z" fill="#0a6e68"/><path d="M448.2 482.5L451.3 483.4V487.6L448.2 488.5Z" fill="#000" opacity="0.42"/><path d="M451.1 483.3L454.0 485.5L451.1 487.7Z" fill="#0a6e68"/><path d="M451.1 483.3L454.0 485.5L451.1 487.7Z" fill="#000" opacity="0.12"/><circle cx="443.2" cy="485.5" r="5.15" fill="#121212" stroke="#0a6e68" stroke-width="2.3"/><rect x="465.5" y="478.8" width="215" height="30" rx="4" fill="#0f0f0f" stroke="#353535" stroke-width="1"/><text x="477.5" y="498.0" fill="#c0c0c0" font-size="12.6" textLength="30.8" lengthAdjust="spacingAndGlyphs" stroke="#c0c0c0" stroke-width="0.3">World</text><path d="M653.4 491.2L658.2 496.2L663 491.2" fill="none" stroke="#d8d8d8" stroke-width="1.8" stroke-linecap="round" stroke-linejoin="round"/><text x="459.7" y="540.0" fill="#f0f0f0" font-size="15.4" textLength="185.6" lengthAdjust="spacingAndGlyphs" stroke="#f0f0f0" stroke-width="0.3">Include Delegated Auth Token</text><path d="M448.2 542.6L451.3 543.5V547.7L448.2 548.6Z" fill="#800000"/><path d="M448.2 542.6L451.3 543.5V547.7L448.2 548.6Z" fill="#000" opacity="0.42"/><path d="M451.1 543.4L454.0 545.6L451.1 547.8Z" fill="#800000"/><path d="M451.1 543.4L454.0 545.6L451.1 547.8Z" fill="#000" opacity="0.12"/><circle cx="443.2" cy="545.6" r="5.15" fill="#121212" stroke="#800000" stroke-width="2.3"/><rect x="465.5" y="543.5" width="19.4" height="20.2" rx="3" fill="#0f0f0f" stroke="#353535" stroke-width="1"/><path d="M469.6 553.8L473.6 557.6L481 549.6" fill="none" stroke="#1a8cff" stroke-width="2.3"/><path d="M629.8 587.6L635 582.2L640.2 587.6" fill="none" stroke="#fff" stroke-width="2.1" stroke-linecap="square"/><path d="M819.2 323.0H822.6Q824.0 323.0 825.0 324.1L829.6 329.7Q830.7 331.0 829.6 332.3L825.0 337.9Q824.0 339.0 822.6 339.0H819.2Q817.0 339.0 817.0 336.8V325.2Q817.0 323.0 819.2 323.0Z" fill="none" stroke="#f0f0f0" stroke-width="1.65" transform="translate(823.65 331.00) scale(0.93) translate(-823.65 -331.00)"/><text x="737.5" y="372.0" fill="#f0f0f0" font-size="15.4" textLength="73.3" lengthAdjust="spacingAndGlyphs" stroke="#f0f0f0" stroke-width="0.3">On Success</text><path d="M819.2 359.0H822.6Q824.0 359.0 825.0 360.1L829.6 365.7Q830.7 367.0 829.6 368.3L825.0 373.9Q824.0 375.0 822.6 375.0H819.2Q817.0 375.0 817.0 372.8V361.2Q817.0 359.0 819.2 359.0Z" fill="#fff"/><text x="765.7" y="408.0" fill="#f0f0f0" font-size="15.4" textLength="44.1" lengthAdjust="spacingAndGlyphs" stroke="#f0f0f0" stroke-width="0.3">On Fail</text><path d="M819.2 395.0H822.6Q824.0 395.0 825.0 396.1L829.6 401.7Q830.7 403.0 829.6 404.3L825.0 409.9Q824.0 411.0 822.6 411.0H819.2Q817.0 411.0 817.0 408.8V397.2Q817.0 395.0 819.2 395.0Z" fill="#fff"/><text x="730.8" y="443.0" fill="#f0f0f0" font-size="15.4" textLength="77.4" lengthAdjust="spacingAndGlyphs" stroke="#f0f0f0" stroke-width="0.3">Status Code</text><path d="M824.2 435.0L827.3 435.9V440.1L824.2 441.0Z" fill="#1fd4a0"/><path d="M824.2 435.0L827.3 435.9V440.1L824.2 441.0Z" fill="#000" opacity="0.42"/><path d="M827.1 435.8L830.0 438.0L827.1 440.2Z" fill="#1fd4a0"/><path d="M827.1 435.8L830.0 438.0L827.1 440.2Z" fill="#000" opacity="0.12"/><circle cx="819.2" cy="438.0" r="6.2" fill="#1fd4a0"/><text x="713.0" y="477.0" fill="#f0f0f0" font-size="15.4" textLength="95.2" lengthAdjust="spacingAndGlyphs" stroke="#f0f0f0" stroke-width="0.3">Json Response</text><path d="M824.2 469.0L827.3 469.9V474.1L824.2 475.0Z" fill="#0058d4"/><path d="M824.2 469.0L827.3 469.9V474.1L824.2 475.0Z" fill="#000" opacity="0.42"/><path d="M827.1 469.8L830.0 472.0L827.1 474.2Z" fill="#0058d4"/><path d="M827.1 469.8L830.0 472.0L827.1 474.2Z" fill="#000" opacity="0.12"/><circle cx="819.2" cy="472.0" r="6.2" fill="#0058d4"/><circle cx="842.7" cy="284.5" r="13.5" fill="#fff" stroke="#1e1e1e" stroke-width="1.3"/><path d="M842.6 275.4V284.6H848.4" fill="none" stroke="#1a1a1a" stroke-width="1.2"/><text x="205.75" y="607.70" transform="translate(205.75 0) scale(1.15 1) translate(-205.75 0)" font-family='"DejaVu Serif","Liberation Serif",serif' font-style="italic" font-size="15" fill="#9be58b" stroke="#9be58b" stroke-width="0.3">ƒ</text><text x="220.5" y="607.7" fill="#cacaca" font-size="15" font-weight="bold" textLength="137.1" lengthAdjust="spacingAndGlyphs" style="text-shadow:0.7px 0.9px 0 rgba(0,0,0,0.45)">Get Auth Counter Url</text><text x="340.8" y="640.7" fill="#f0f0f0" font-size="15.4" textLength="16.8" lengthAdjust="spacingAndGlyphs" stroke="#f0f0f0" stroke-width="0.3">Url</text><path d="M376.5 633.0L379.6 633.9V638.1L376.5 639.0Z" fill="#f400d4"/><path d="M376.5 633.0L379.6 633.9V638.1L376.5 639.0Z" fill="#000" opacity="0.42"/><path d="M379.4 633.8L382.3 636.0L379.4 638.2Z" fill="#f400d4"/><path d="M379.4 633.8L382.3 636.0L379.4 638.2Z" fill="#000" opacity="0.12"/><circle cx="371.5" cy="636.0" r="6.2" fill="#f400d4"/><text x="1105.35" y="248.20" transform="translate(1105.35 0) scale(1.15 1) translate(-1105.35 0)" font-family='"DejaVu Serif","Liberation Serif",serif' font-style="italic" font-size="15" fill="#86ccff" stroke="#86ccff" stroke-width="0.3">ƒ</text><text x="1120.7" y="248.2" fill="#cacaca" font-size="15" font-weight="bold" textLength="190.3" lengthAdjust="spacingAndGlyphs" style="text-shadow:0.7px 0.9px 0 rgba(0,0,0,0.45)">Read Json Object Into Struct</text><path d="M1105.6 269.3H1109.0Q1110.4 269.3 1111.4 270.4L1116.0 276.0Q1117.1 277.3 1116.0 278.6L1111.4 284.2Q1110.4 285.3 1109.0 285.3H1105.6Q1103.4 285.3 1103.4 283.1V271.5Q1103.4 269.3 1105.6 269.3Z" fill="#fff"/><path d="M1323.2 269.3H1326.6Q1328.0 269.3 1329.0 270.4L1333.6 276.0Q1334.7 277.3 1333.6 278.6L1329.0 284.2Q1328.0 285.3 1326.6 285.3H1323.2Q1321.0 285.3 1321.0 283.1V271.5Q1321.0 269.3 1323.2 269.3Z" fill="#fff"/><path d="M1114.0 309.2L1117.1 310.1V314.3L1114.0 315.2Z" fill="#0058d4"/><path d="M1114.0 309.2L1117.1 310.1V314.3L1114.0 315.2Z" fill="#000" opacity="0.42"/><path d="M1116.9 310.0L1119.8 312.2L1116.9 314.4Z" fill="#0058d4"/><path d="M1116.9 310.0L1119.8 312.2L1116.9 314.4Z" fill="#000" opacity="0.12"/><circle cx="1109.0" cy="312.2" r="6.2" fill="#0058d4"/><text x="1126.0" y="316.7" fill="#f0f0f0" font-size="15.4" textLength="74.1" lengthAdjust="spacingAndGlyphs" stroke="#f0f0f0" stroke-width="0.3">Json Object</text><text x="1259.9" y="316.5" fill="#f0f0f0" font-size="15.4" textLength="51.8" lengthAdjust="spacingAndGlyphs" stroke="#f0f0f0" stroke-width="0.3">Success</text><path d="M1329.6 308.8L1332.7 309.7V313.9L1329.6 314.8Z" fill="#8e0000"/><path d="M1329.6 308.8L1332.7 309.7V313.9L1329.6 314.8Z" fill="#000" opacity="0.42"/><path d="M1332.5 309.6L1335.4 311.8L1332.5 314.0Z" fill="#8e0000"/><path d="M1332.5 309.6L1335.4 311.8L1332.5 314.0Z" fill="#000" opacity="0.12"/><circle cx="1324.6" cy="311.8" r="6.2" fill="#8e0000"/><path d="M1114.0 342.5L1117.1 343.4V347.6L1114.0 348.5Z" fill="#0058d4"/><path d="M1114.0 342.5L1117.1 343.4V347.6L1114.0 348.5Z" fill="#000" opacity="0.42"/><path d="M1116.9 343.3L1119.8 345.5L1116.9 347.7Z" fill="#0058d4"/><path d="M1116.9 343.3L1119.8 345.5L1116.9 347.7Z" fill="#000" opacity="0.12"/><circle cx="1109.0" cy="345.5" r="6.2" fill="#0058d4"/><text x="1126.0" y="350.5" fill="#f0f0f0" font-size="15.4" textLength="64.3" lengthAdjust="spacingAndGlyphs" stroke="#f0f0f0" stroke-width="0.3">Out Struct</text><path d="M1388 243.1h4.6M1403 237.3h-9v11.7h9" fill="none" stroke="#fff" stroke-width="2.2"/><path d="M1399.3 233.9l5 3.4-5 3.4zM1399.3 245.6l5 3.4-5 3.4z" fill="#fff"/><text x="1409.0" y="247.8" fill="#cacaca" font-size="15" font-weight="bold" textLength="47.2" lengthAdjust="spacingAndGlyphs" style="text-shadow:0.7px 0.9px 0 rgba(0,0,0,0.45)">Branch</text><path d="M1393.6 269.0H1397.0Q1398.4 269.0 1399.4 270.1L1404.0 275.7Q1405.1 277.0 1404.0 278.3L1399.4 283.9Q1398.4 285.0 1397.0 285.0H1393.6Q1391.4 285.0 1391.4 282.8V271.2Q1391.4 269.0 1393.6 269.0Z" fill="#fff"/><text x="1518.8" y="281.8" fill="#f0f0f0" font-size="15.4" textLength="28.2" lengthAdjust="spacingAndGlyphs" stroke="#f0f0f0" stroke-width="0.3">True</text><path d="M1554.2 269.0H1557.6Q1559.0 269.0 1560.0 270.1L1564.6 275.7Q1565.7 277.0 1564.6 278.3L1560.0 283.9Q1559.0 285.0 1557.6 285.0H1554.2Q1552.0 285.0 1552.0 282.8V271.2Q1552.0 269.0 1554.2 269.0Z" fill="#fff"/><path d="M1402.2 309.3L1405.3 310.2V314.4L1402.2 315.3Z" fill="#8e0000"/><path d="M1402.2 309.3L1405.3 310.2V314.4L1402.2 315.3Z" fill="#000" opacity="0.42"/><path d="M1405.1 310.1L1408.0 312.3L1405.1 314.5Z" fill="#8e0000"/><path d="M1405.1 310.1L1408.0 312.3L1405.1 314.5Z" fill="#000" opacity="0.12"/><circle cx="1397.2" cy="312.3" r="6.2" fill="#8e0000"/><text x="1413.8" y="316.6" fill="#f0f0f0" font-size="15.4" textLength="61.7" lengthAdjust="spacingAndGlyphs" stroke="#f0f0f0" stroke-width="0.3">Condition</text><text x="1513.0" y="317.7" fill="#f0f0f0" font-size="15.4" textLength="34.0" lengthAdjust="spacingAndGlyphs" stroke="#f0f0f0" stroke-width="0.3">False</text><path d="M1554.2 305.0H1557.6Q1559.0 305.0 1560.0 306.1L1564.6 311.7Q1565.7 313.0 1564.6 314.3L1560.0 319.9Q1559.0 321.0 1557.6 321.0H1554.2Q1552.0 321.0 1552.0 318.8V307.2Q1552.0 305.0 1554.2 305.0Z" fill="none" stroke="#f0f0f0" stroke-width="1.65" transform="translate(1558.65 313.00) scale(0.93) translate(-1558.65 -313.00)"/><rect x="1405.9" y="366.8" width="10.4" height="5.1" rx="2.55" fill="#fff"/><path d="M1416.5 365.3L1419.6 362.7M1416.5 373.3L1419.6 375.9" stroke="#fff" stroke-width="1.5" fill="none"/><path d="M1421.4 360.9L1417.7 361.2L1421.1 364.6zM1421.4 377.7L1417.7 377.4L1421.1 374z" fill="#fff"/><text x="1426.7" y="373.7" fill="#cacaca" font-size="15" font-weight="bold" textLength="347.6" lengthAdjust="spacingAndGlyphs" style="text-shadow:0.7px 0.9px 0 rgba(0,0,0,0.45)">Break SM2_HttpTaskExample_GetCounterResponse</text><path d="M1420.0 398.9L1423.1 399.8V404.0L1420.0 404.9Z" fill="#0058d4"/><path d="M1420.0 398.9L1423.1 399.8V404.0L1420.0 404.9Z" fill="#000" opacity="0.42"/><path d="M1422.9 399.7L1425.8 401.9L1422.9 404.1Z" fill="#0058d4"/><path d="M1422.9 399.7L1425.8 401.9L1422.9 404.1Z" fill="#000" opacity="0.12"/><circle cx="1415.0" cy="401.9" r="6.2" fill="#0058d4"/><text x="1431.6" y="406.7" fill="#f0f0f0" font-size="15.4" textLength="291.4" lengthAdjust="spacingAndGlyphs" stroke="#f0f0f0" stroke-width="0.3">SM2 Http Task Example Get Counter Response</text><text x="1753.8" y="406.6" fill="#f0f0f0" font-size="15.4" textLength="49.5" lengthAdjust="spacingAndGlyphs" stroke="#f0f0f0" stroke-width="0.3">Counter</text><path d="M1821.0 398.9L1824.1 399.8V404.0L1821.0 404.9Z" fill="#1fd4a0"/><path d="M1821.0 398.9L1824.1 399.8V404.0L1821.0 404.9Z" fill="#000" opacity="0.42"/><path d="M1823.9 399.7L1826.8 401.9L1823.9 404.1Z" fill="#1fd4a0"/><path d="M1823.9 399.7L1826.8 401.9L1823.9 404.1Z" fill="#000" opacity="0.12"/><circle cx="1816.0" cy="401.9" r="6.2" fill="#1fd4a0"/><text x="1447.75" y="554.20" transform="translate(1447.75 0) scale(1.15 1) translate(-1447.75 0)" font-family='"DejaVu Serif","Liberation Serif",serif' font-style="italic" font-size="15" fill="#86ccff" stroke="#86ccff" stroke-width="0.3">ƒ</text><text x="1462.9" y="554.2" fill="#cacaca" font-size="15" font-weight="bold" textLength="58.9" lengthAdjust="spacingAndGlyphs" style="text-shadow:0.7px 0.9px 0 rgba(0,0,0,0.45)">Log Error</text><path d="M1447.5 575.1H1450.9Q1452.3 575.1 1453.3 576.2L1457.9 581.8Q1459.0 583.1 1457.9 584.4L1453.3 590.0Q1452.3 591.1 1450.9 591.1H1447.5Q1445.3 591.1 1445.3 588.9V577.3Q1445.3 575.1 1447.5 575.1Z" fill="#fff"/><path d="M1641.0 575.1H1644.4Q1645.8 575.1 1646.8 576.2L1651.4 581.8Q1652.5 583.1 1651.4 584.4L1646.8 590.0Q1645.8 591.1 1644.4 591.1H1641.0Q1638.8 591.1 1638.8 588.9V577.3Q1638.8 575.1 1641.0 575.1Z" fill="none" stroke="#f0f0f0" stroke-width="1.65" transform="translate(1645.45 583.10) scale(0.93) translate(-1645.45 -583.10)"/><path d="M1456.4 615.2L1459.5 616.1V620.3L1456.4 621.2Z" fill="#f400d4"/><path d="M1456.4 615.2L1459.5 616.1V620.3L1456.4 621.2Z" fill="#000" opacity="0.42"/><path d="M1459.3 616.0L1462.2 618.2L1459.3 620.4Z" fill="#f400d4"/><path d="M1459.3 616.0L1462.2 618.2L1459.3 620.4Z" fill="#000" opacity="0.12"/><circle cx="1451.4" cy="618.2" r="6.2" fill="#f400d4"/><text x="1467.9" y="623.1" fill="#f0f0f0" font-size="15.4" textLength="26.7" lengthAdjust="spacingAndGlyphs" stroke="#f0f0f0" stroke-width="0.3">Msg</text><path d="M1456.4 651.0L1459.5 651.9V656.1L1456.4 657.0Z" fill="#800000"/><path d="M1456.4 651.0L1459.5 651.9V656.1L1456.4 657.0Z" fill="#000" opacity="0.42"/><path d="M1459.3 651.8L1462.2 654.0L1459.3 656.2Z" fill="#800000"/><path d="M1459.3 651.8L1462.2 654.0L1459.3 656.2Z" fill="#000" opacity="0.12"/><circle cx="1451.4" cy="654.0" r="5.15" fill="#121212" stroke="#800000" stroke-width="2.3"/><text x="1467.9" y="659.2" fill="#f0f0f0" font-size="15.4" textLength="85.5" lengthAdjust="spacingAndGlyphs" stroke="#f0f0f0" stroke-width="0.3">Log to Screen</text><rect x="1559.8" y="644.6" width="18.8" height="18.8" rx="3" fill="#0f0f0f" stroke="#353535" stroke-width="1"/><path d="M1563.6 654.4L1567.4 658L1574.6 650.2" fill="none" stroke="#1a8cff" stroke-width="2.3"/><path d="M1456.4 690.1L1459.5 691.0V695.2L1456.4 696.1Z" fill="#39b818"/><path d="M1456.4 690.1L1459.5 691.0V695.2L1456.4 696.1Z" fill="#000" opacity="0.42"/><path d="M1459.3 690.9L1462.2 693.1L1459.3 695.3Z" fill="#39b818"/><path d="M1459.3 690.9L1462.2 693.1L1459.3 695.3Z" fill="#000" opacity="0.12"/><circle cx="1451.4" cy="693.1" r="5.15" fill="#121212" stroke="#39b818" stroke-width="2.3"/><text x="1467.9" y="698.0" fill="#f0f0f0" font-size="15.4" textLength="96.6" lengthAdjust="spacingAndGlyphs" stroke="#f0f0f0" stroke-width="0.3">Time to Display</text><rect x="1570.6" y="682.8" width="31.2" height="21.2" rx="1.5" fill="#161716" stroke="#c4c4c4" stroke-width="1.1"/><text x="1576.2" y="698.0" fill="#b4b4b4" font-size="14" textLength="20.5" lengthAdjust="spacingAndGlyphs" stroke="#b4b4b4" stroke-width="0.3">2.0</text><rect x="1009.85" y="648.85" width="16.7" height="15.7" rx="1.2" fill="#fff" fill-opacity="0.47" stroke="#fff" stroke-width="1.3"/><rect x="1009.8000000000001" y="648.8000000000001" width="16.8" height="5.2" rx="1" fill="#fff"/><text x="1030.8" y="661.6" fill="#cacaca" font-size="15" font-weight="bold" textLength="81.0" lengthAdjust="spacingAndGlyphs" style="text-shadow:0.7px 0.9px 0 rgba(0,0,0,0.45)">Format Text</text><text x="1035.7" y="694.2" fill="#f0f0f0" font-size="15.4" textLength="45.7" lengthAdjust="spacingAndGlyphs" stroke="#f0f0f0" stroke-width="0.3">Format</text><path d="M1024.0 699.2L1027.1 700.1V704.3L1024.0 705.2Z" fill="#e070a8"/><path d="M1024.0 699.2L1027.1 700.1V704.3L1024.0 705.2Z" fill="#000" opacity="0.42"/><path d="M1026.9 700.0L1029.8 702.2L1026.9 704.4Z" fill="#e070a8"/><path d="M1026.9 700.0L1029.8 702.2L1026.9 704.4Z" fill="#000" opacity="0.12"/><circle cx="1019.0" cy="702.2" r="5.15" fill="#121212" stroke="#e070a8" stroke-width="2.3"/><rect x="1041.6" y="699.9" width="216" height="21.4" rx="1.5" fill="#191a19" stroke="#bdbdbd" stroke-width="1.1"/><text x="1046.6" y="714.3" fill="#bcbcbc" font-size="14" textLength="205.1" lengthAdjust="spacingAndGlyphs" stroke="#bcbcbc" stroke-width="0.3">Request failed with status: {0}</text><rect x="1266.8" y="702.8" width="2" height="16.3" fill="#8e8e8e"/><path d="M1269.9 703.8C1272 701.5 1274.5 702 1276.5 703.9C1278.5 705.8 1280.3 706.3 1282.1 704.4V714.4C1280.3 716.3 1278.5 715.8 1276.5 713.9C1274.5 712 1272 711.6 1269.9 713.8Z" fill="#6e6e6e"/><path d="M1024.0 745.8L1027.1 746.7V750.9L1024.0 751.8Z" fill="#1fd4a0"/><path d="M1024.0 745.8L1027.1 746.7V750.9L1024.0 751.8Z" fill="#000" opacity="0.42"/><path d="M1026.9 746.6L1029.8 748.8L1026.9 751.0Z" fill="#1fd4a0"/><path d="M1026.9 746.6L1029.8 748.8L1026.9 751.0Z" fill="#000" opacity="0.12"/><circle cx="1019.0" cy="748.8" r="6.2" fill="#1fd4a0"/><text x="1035.7" y="753.6" fill="#f0f0f0" font-size="15.4" textLength="7.9" lengthAdjust="spacingAndGlyphs" stroke="#f0f0f0" stroke-width="0.3">0</text><text x="1320.9" y="694.8" fill="#f0f0f0" font-size="15.4" textLength="39.4" lengthAdjust="spacingAndGlyphs" stroke="#f0f0f0" stroke-width="0.3">Result</text><path d="M1377.3 687.0L1380.4 687.9V692.1L1377.3 693.0Z" fill="#e878b0"/><path d="M1377.3 687.0L1380.4 687.9V692.1L1377.3 693.0Z" fill="#000" opacity="0.42"/><path d="M1380.2 687.8L1383.1 690.0L1380.2 692.2Z" fill="#e878b0"/><path d="M1380.2 687.8L1383.1 690.0L1380.2 692.2Z" fill="#000" opacity="0.12"/><circle cx="1372.3" cy="690.0" r="6.2" fill="#e878b0"/><text x="143.9" y="506.6" fill="#f0f0f0" font-size="15.4" textLength="24.8" lengthAdjust="spacingAndGlyphs" stroke="#f0f0f0" stroke-width="0.3">Self</text><path d="M186.4 499.0L189.5 499.9V504.1L186.4 505.0Z" fill="#00a8f4"/><path d="M186.4 499.0L189.5 499.9V504.1L186.4 505.0Z" fill="#000" opacity="0.42"/><path d="M189.3 499.8L192.2 502.0L189.3 504.2Z" fill="#00a8f4"/><path d="M189.3 499.8L192.2 502.0L189.3 504.2Z" fill="#000" opacity="0.12"/><circle cx="181.4" cy="502.0" r="6.2" fill="#00a8f4"/><text x="1091.7" y="398.5" fill="#f0f0f0" font-size="15.4" textLength="138.3" lengthAdjust="spacingAndGlyphs" stroke="#f0f0f0" stroke-width="0.3">Get Counter Response</text><path d="M1246.5 391.1L1249.6 392.0V396.2L1246.5 397.1Z" fill="#0058d4"/><path d="M1246.5 391.1L1249.6 392.0V396.2L1246.5 397.1Z" fill="#000" opacity="0.42"/><path d="M1249.4 391.9L1252.3 394.1L1249.4 396.3Z" fill="#0058d4"/><path d="M1249.4 391.9L1252.3 394.1L1249.4 396.3Z" fill="#000" opacity="0.12"/><circle cx="1241.5" cy="394.1" r="6.2" fill="#0058d4"/><text x="1397.7" y="470.5" fill="#f0f0f0" font-size="15.4" textLength="138.1" lengthAdjust="spacingAndGlyphs" stroke="#f0f0f0" stroke-width="0.3">Get Counter Response</text><path d="M1552.2 463.1L1555.3 464.0V468.2L1552.2 469.1Z" fill="#0058d4"/><path d="M1552.2 463.1L1555.3 464.0V468.2L1552.2 469.1Z" fill="#000" opacity="0.42"/><path d="M1555.1 463.9L1558.0 466.1L1555.1 468.3Z" fill="#0058d4"/><path d="M1555.1 463.9L1558.0 466.1L1555.1 468.3Z" fill="#000" opacity="0.12"/><circle cx="1547.2" cy="466.1" r="6.2" fill="#0058d4"/><text x="1670.6" y="269.5" fill="#d2d2d2" font-size="15" font-weight="bold" textLength="91.7" lengthAdjust="spacingAndGlyphs" style="text-shadow:0.8px 1px 0 rgba(0,0,0,0.6)">SET w/ Notify</text><path d="M1630.1 269.2H1633.5Q1634.9 269.2 1635.9 270.3L1640.5 275.9Q1641.6 277.2 1640.5 278.5L1635.9 284.1Q1634.9 285.2 1633.5 285.2H1630.1Q1627.9 285.2 1627.9 283.0V271.4Q1627.9 269.2 1630.1 269.2Z" fill="#fff"/><path d="M1795.4 269.2H1798.8Q1800.2 269.2 1801.2 270.3L1805.8 275.9Q1806.9 277.2 1805.8 278.5L1801.2 284.1Q1800.2 285.2 1798.8 285.2H1795.4Q1793.2 285.2 1793.2 283.0V271.4Q1793.2 269.2 1795.4 269.2Z" fill="none" stroke="#f0f0f0" stroke-width="1.65" transform="translate(1799.85 277.20) scale(0.93) translate(-1799.85 -277.20)"/><path d="M1638.0 309.2L1641.1 310.1V314.3L1638.0 315.2Z" fill="#1fd4a0"/><path d="M1638.0 309.2L1641.1 310.1V314.3L1638.0 315.2Z" fill="#000" opacity="0.42"/><path d="M1640.9 310.0L1643.8 312.2L1640.9 314.4Z" fill="#1fd4a0"/><path d="M1640.9 310.0L1643.8 312.2L1640.9 314.4Z" fill="#000" opacity="0.12"/><circle cx="1633.0" cy="312.2" r="6.2" fill="#1fd4a0"/><text x="1649.9" y="316.2" fill="#f0f0f0" font-size="15.4" textLength="92.7" lengthAdjust="spacingAndGlyphs" stroke="#f0f0f0" stroke-width="0.3">Server Counter</text><path d="M1801.3 309.2L1804.4 310.1V314.3L1801.3 315.2Z" fill="#1fd4a0"/><path d="M1801.3 309.2L1804.4 310.1V314.3L1801.3 315.2Z" fill="#000" opacity="0.42"/><path d="M1804.2 310.0L1807.1 312.2L1804.2 314.4Z" fill="#1fd4a0"/><path d="M1804.2 310.0L1807.1 312.2L1804.2 314.4Z" fill="#000" opacity="0.12"/><circle cx="1796.3" cy="312.2" r="5.15" fill="#2b2b2b" stroke="#1fd4a0" stroke-width="2.3"/><circle cx="1823.4" cy="239.8" r="6.7" fill="url(#sph)"/><circle cx="1830" cy="245.8" r="7" fill="url(#sph)"/><path d="M1456.0 750.6L1459.1 751.5V755.7L1456.0 756.6Z" fill="#e878b0"/><path d="M1456.0 750.6L1459.1 751.5V755.7L1456.0 756.6Z" fill="#000" opacity="0.42"/><path d="M1458.9 751.4L1461.8 753.6L1458.9 755.8Z" fill="#e878b0"/><path d="M1458.9 751.4L1461.8 753.6L1458.9 755.8Z" fill="#000" opacity="0.12"/><circle cx="1451.0" cy="753.6" r="6.2" fill="#e878b0"/><rect x="1498" y="749.3" width="6.2" height="8.2" rx="3" fill="#b4b4b4"/><path d="M1552.3 750.6L1555.4 751.5V755.7L1552.3 756.6Z" fill="#f400d4"/><path d="M1552.3 750.6L1555.4 751.5V755.7L1552.3 756.6Z" fill="#000" opacity="0.42"/><path d="M1555.2 751.4L1558.1 753.6L1555.2 755.8Z" fill="#f400d4"/><path d="M1555.2 751.4L1558.1 753.6L1555.2 755.8Z" fill="#000" opacity="0.12"/><circle cx="1547.3" cy="753.6" r="6.2" fill="#f400d4"/></g><g opacity="0.93"><path d="M70.8 471L74.6 478L78.6 471Z" fill="#e0e0e0"/><rect x="61.5" y="383.4" width="363.5" height="88.4" rx="3.5" fill="url(#bub)" stroke="#f4f4f4" stroke-width="1.2"/></g><g clip-path="url(#bubc)"><g fill="none" stroke-linecap="round" opacity="0.09"><path d="M280.5 334.0C333.7 334.0 383.8 331.0 437.0 331.0" stroke="#ffffff" stroke-width="2.6"/><path d="M830.5 367.0C951.3 367.0 982.5 277.3 1103.3 277.3" stroke="#ffffff" stroke-width="2.6"/><path d="M830.5 403.0C1095.4 403.0 1180.3 583.1 1445.2 583.1" stroke="#ffffff" stroke-width="2.6"/><path d="M1335.1 277.3C1353.9 277.3 1372.5 277.0 1391.3 277.0" stroke="#ffffff" stroke-width="2.6"/><path d="M1566.0 277.0C1586.7 277.0 1607.2 277.2 1627.9 277.2" stroke="#ffffff" stroke-width="2.6"/><path d="M1334.6 311.8C1353.6 311.8 1372.0 312.3 1391.0 312.3" stroke="#840000" stroke-width="1.3"/><path d="M191.0 502.0C295.0 502.0 333.0 436.0 437.0 436.0" stroke="#00a8f4" stroke-width="1.6"/><path d="M381.5 636.0C490.0 636.0 328.5 366.0 437.0 366.0" stroke="#f400d4" stroke-width="1.6"/><path d="M829.4 438.0C994.1 438.0 848.1 748.8 1012.8 748.8" stroke="#1fd4a0" stroke-width="1.6"/><path d="M829.4 472.0C973.8 472.0 958.4 312.3 1102.8 312.3" stroke="#0058d4" stroke-width="1.6"/><path d="M1251.5 394.1C1374.9 394.1 979.4 345.5 1102.8 345.5" stroke="#0058d4" stroke-width="1.6"/><path d="M1557.4 466.1C1688.6 466.1 1277.5 401.9 1408.7 401.9" stroke="#0058d4" stroke-width="1.6"/><path d="M1826.2 401.9C2003.9 401.9 1449.2 312.2 1626.9 312.2" stroke="#1fd4a0" stroke-width="1.6"/><path d="M1382.5 690.0C1424.5 690.0 1402.8 753.6 1444.8 753.6" stroke="#e878b0" stroke-width="1.6"/><path d="M1557.9 753.6C1700.7 753.6 1302.4 618.2 1445.2 618.2" stroke="#f400d4" stroke-width="1.6"/></g></g><rect x="66.8" y="387.4" width="337" height="79" rx="39.5" fill="none" stroke="#3a3a3a" stroke-width="1.1"/><g font-family='"Liberation Sans", Arial, sans-serif'><text x="75.8" y="404.7" fill="#1c1c1c" font-size="15.4" textLength="200.4" lengthAdjust="spacingAndGlyphs">This actor is server authority,</text><text x="75.8" y="422.7" fill="#1c1c1c" font-size="15.4" textLength="258.2" lengthAdjust="spacingAndGlyphs">so it can be used as the auth context.</text><text x="75.8" y="440.7" fill="#1c1c1c" font-size="15.4" textLength="318.1" lengthAdjust="spacingAndGlyphs">This means the request will use the identity of</text><text x="75.8" y="458.7" fill="#1c1c1c" font-size="15.4" textLength="67.8" lengthAdjust="spacingAndGlyphs">the server</text></g><path d="M410.2 392.2h3" stroke="#8a8a8a" stroke-width="1.2"/><path d="M413 389.1h1.9l2.2 2h0.2l2.6-2.2v6.6l-2.6-2.2h-0.2l-2.2 2H413z" fill="#7c7c7c"/><rect x="410.4" y="401.3" width="10.4" height="8.4" fill="#bfc8d0"/><rect x="410.8" y="408.4" width="9.6" height="1.3" fill="#9aa4ae"/><path d="M411.6 406.3h1.7M414.2 406.3h1.7M417.2 406.3h1.7" stroke="#4e5662" stroke-width="1.3"/>
</svg></body></html>
